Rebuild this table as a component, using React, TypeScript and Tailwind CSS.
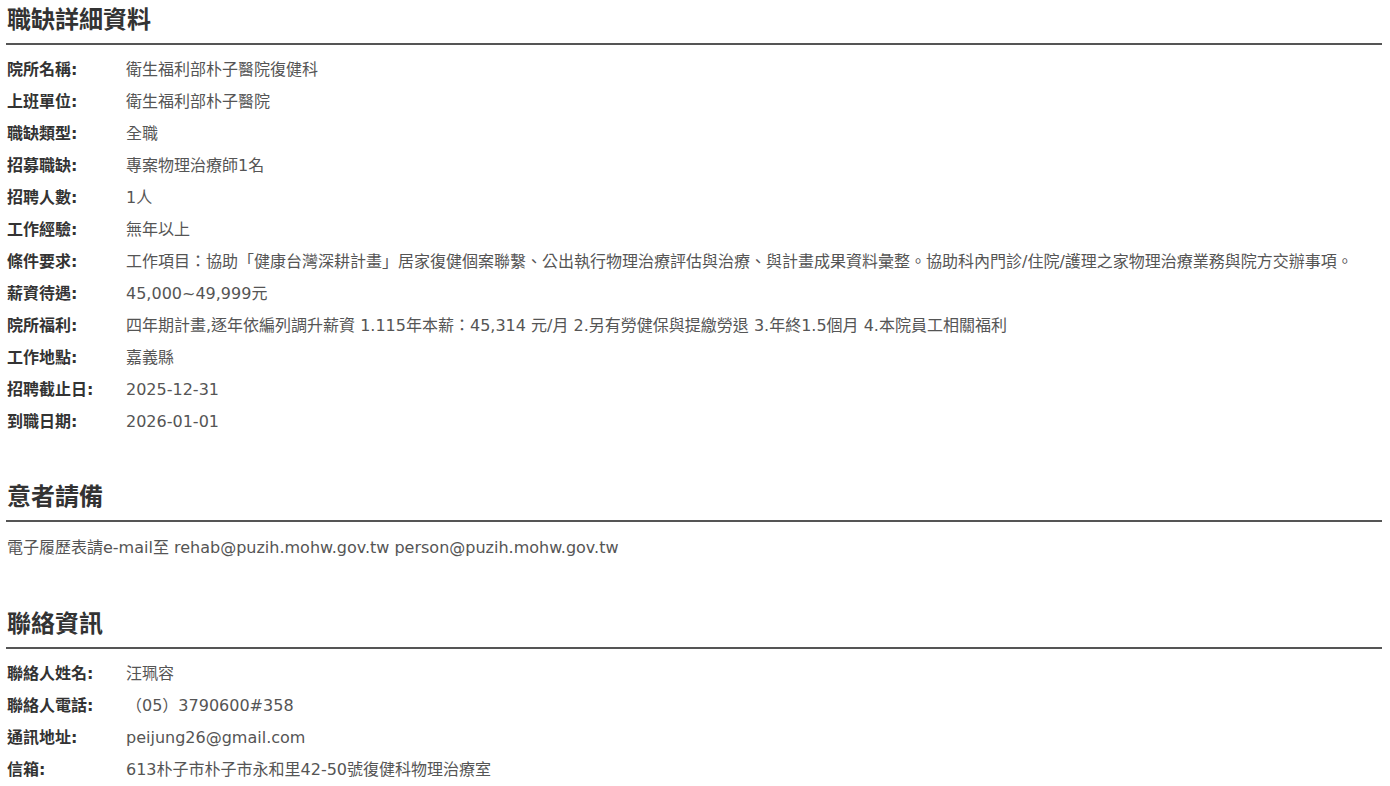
const font = { fontFamily: '"DejaVu Sans", Verdana, "Noto Sans CJK TC", sans-serif' };

type Row = { label: string; value: string };

const jobRows: Row[] = [
    { label: "院所名稱:", value: "衛生福利部朴子醫院復健科" },
    { label: "上班單位:", value: "衛生福利部朴子醫院" },
    { label: "職缺類型:", value: "全職" },
    { label: "招募職缺:", value: "專案物理治療師1名" },
    { label: "招聘人數:", value: "1人" },
    { label: "工作經驗:", value: "無年以上" },
    {
        label: "條件要求:",
        value: "工作項目：協助「健康台灣深耕計畫」居家復健個案聯繫、公出執行物理治療評估與治療、與計畫成果資料彙整。協助科內門診/住院/護理之家物理治療業務與院方交辦事項。",
    },
    { label: "薪資待遇:", value: "45,000~49,999元" },
    {
        label: "院所福利:",
        value: "四年期計畫,逐年依編列調升薪資 1.115年本薪：45,314 元/月 2.另有勞健保與提繳勞退 3.年終1.5個月 4.本院員工相關福利",
    },
    { label: "工作地點:", value: "嘉義縣" },
    { label: "招聘截止日:", value: "2025-12-31" },
    { label: "到職日期:", value: "2026-01-01" },
];

const contactRows: Row[] = [
    { label: "聯絡人姓名:", value: "汪珮容" },
    { label: "聯絡人電話:", value: "（05）3790600#358" },
    { label: "通訊地址:", value: "peijung26@gmail.com" },
    { label: "信箱:", value: "613朴子市朴子市永和里42-50號復健科物理治療室" },
];

function Heading({ title }: { title: string }) {
    return (
        <h2 className="pt-[4px] pb-[7px] border-b-2 border-[#555] text-[24px] leading-[32px] font-bold text-[#333] pl-px">
            {title}
        </h2>
    );
}

function InfoRows({ rows }: { rows: Row[] }) {
    return (
        <ul className="mt-[9px]">
            {rows.map((r, i) => (
                <li key={i} className="flex h-8 items-center text-[16px] leading-8 whitespace-nowrap">
                    <span className="w-[120px] shrink-0 pl-px font-bold text-[#333]">{r.label}</span>
                    <span className="text-[#555]">{r.value}</span>
                </li>
            ))}
        </ul>
    );
}

export default function App() {
    return (
        <div className="bg-white min-h-screen pl-[6px] pr-[8px]" style={font}>
            <section className="mb-[39px]">
                <Heading title="職缺詳細資料" />
                <InfoRows rows={jobRows} />
            </section>
            <section className="mb-10">
                <Heading title="意者請備" />
                <p className="mt-[10px] h-[32px] leading-8 text-[16px] text-[#555] pl-px">
                    電子履歷表請e-mail至 rehab@puzih.mohw.gov.tw person@puzih.mohw.gov.tw
                </p>
            </section>
            <section>
                <Heading title="聯絡資訊" />
                <InfoRows rows={contactRows} />
            </section>
        </div>
    );
}
